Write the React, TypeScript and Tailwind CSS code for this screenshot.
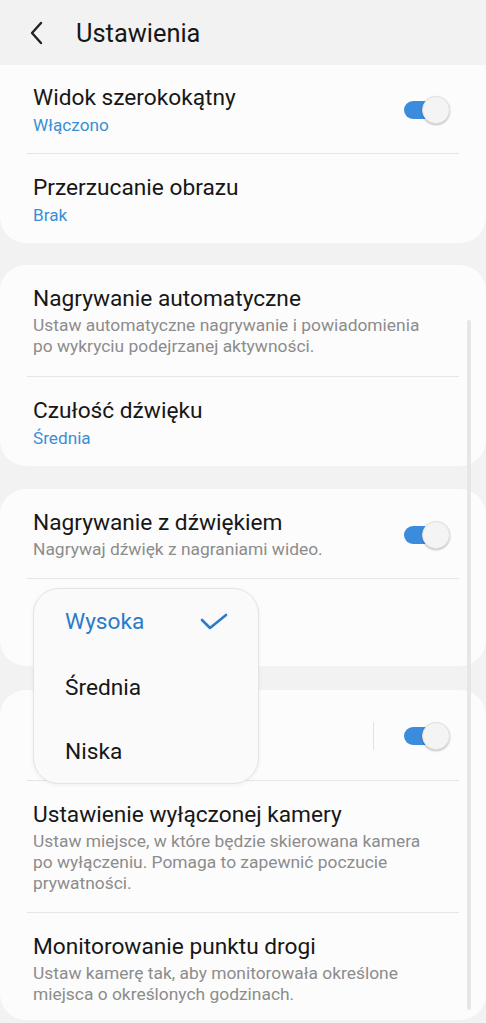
import React from "react";

const FONT = { fontFamily: "Roboto, 'Noto Sans', 'Liberation Sans', sans-serif" };

function Toggle() {
  return (
    <div className="relative w-[46px] h-[28px] shrink-0">
      <div className="absolute left-0 top-[5px] w-[40px] h-[18px] rounded-full bg-[#3b8cdc]" />
      <div className="absolute left-[18px] top-0 w-[28px] h-[28px] rounded-full bg-[#f4f4f4] border border-[#e2e2e2] shadow-[0_1px_2px_rgba(0,0,0,0.25)]" />
    </div>
  );
}

function Divider() {
  return <div className="mx-[27px] h-px bg-[#e6e6e6]" />;
}

type RowProps = {
  title: string;
  blue?: string;
  gray?: string[];
  toggle?: boolean;
  sep?: boolean;
  cls: string;
};

function Row({ title, blue, gray, toggle, sep, cls }: RowProps) {
  return (
    <div className={"flex items-center pl-[33px] pr-[36px] " + cls}>
      <div className="flex-1 min-w-0">
        <div className="text-[22.7px] leading-[28px] text-[#171717]">{title}</div>
        {blue && <div className="mt-[2px] text-[17.2px] leading-[22px] text-[#3a8fd4]">{blue}</div>}
        {gray && (
          <div className="mt-[2px] text-[17.4px] leading-[21px] text-[#8c8c8c]">
            {gray.map((g, i) => (
              <div key={i} className="whitespace-nowrap">{g}</div>
            ))}
          </div>
        )}
      </div>
      {sep && <div className="w-px h-[28px] bg-[#e2e2e2] mr-[30px]" />}
      {toggle && <Toggle />}
    </div>
  );
}

export default function App() {
  return (
    <div className="relative w-[486px] h-[1023px] overflow-hidden bg-[#f2f2f2]" style={FONT}>
      {/* Header */}
      <div className="h-[65px] flex items-center bg-[#f2f2f2]">
        <div className="w-[76px] flex items-center pl-[28px]">
          <svg width="18" height="24" viewBox="0 0 18 24" fill="none">
            <path d="M13 2 L4 12 L13 22" stroke="#222" strokeWidth="2.4" strokeLinecap="round" strokeLinejoin="round" />
          </svg>
        </div>
        <div className="text-[25.4px] leading-[30px] text-[#171717]">Ustawienia</div>
      </div>

      <div className="flex flex-col">
        {/* Card 1 */}
        <div className="bg-[#fcfcfc] rounded-b-[26px]">
          <Row cls="pt-[19px] pb-[17px]" title="Widok szerokokątny" blue="Włączono" toggle />
          <Divider />
          <Row cls="pt-[20px] pb-[17px]" title="Przerzucanie obrazu" blue="Brak" />
        </div>

        {/* Card 2 */}
        <div className="mt-[22px] bg-[#fcfcfc] rounded-[26px]">
          <Row
            cls="pt-[20px] pb-[19px]"
            title="Nagrywanie automatyczne"
            gray={["Ustaw automatyczne nagrywanie i powiadomienia", "po wykryciu podejrzanej aktywności."]}
          />
          <Divider />
          <Row cls="pt-[20px] pb-[17px]" title="Czułość dźwięku" blue="Średnia" />
        </div>

        {/* Card 3 */}
        <div className="mt-[23px] bg-[#fcfcfc] rounded-[26px]">
          <Row
            cls="pt-[20px] pb-[18px]"
            title="Nagrywanie z dźwiękiem"
            gray={["Nagrywaj dźwięk z nagraniami wideo."]}
            toggle
          />
          <Divider />
          <Row cls="pt-[20px] pb-[15px]" title="Czułość ruchu" blue="Wysoka" />
        </div>

        {/* Card 4 */}
        <div className="mt-[24px] bg-[#fcfcfc] rounded-[26px]">
          <Row cls="pt-[20px] pb-[18px]" title="Tryb nocny" blue="Automat." toggle sep />
          <Divider />
          <Row
            cls="pt-[20px] pb-[18px]"
            title="Ustawienie wyłączonej kamery"
            gray={[
              "Ustaw miejsce, w które będzie skierowana kamera",
              "po wyłączeniu. Pomaga to zapewnić poczucie",
              "prywatności.",
            ]}
          />
          <Divider />
          <Row
            cls="pt-[20px] pb-[15px]"
            title="Monitorowanie punktu drogi"
            gray={["Ustaw kamerę tak, aby monitorowała określone", "miejsca o określonych godzinach."]}
          />
        </div>
      </div>

      {/* Scrollbar */}
      <div className="absolute left-[467px] top-[320px] w-[4px] h-[690px] rounded-full bg-[#e6e6e6]" />

      {/* Popup menu */}
      <div className="absolute left-[33px] top-[588px] w-[226px] h-[196px] rounded-[26px] bg-[#fafafa] border border-[#e4e4e4] shadow-[0_1px_4px_rgba(0,0,0,0.06)] flex flex-col">
        <div className="h-[66px] shrink-0 flex items-center pl-[31px] pr-[30px]">
          <div className="flex-1 text-[22.7px] text-[#2a7cc7]">Wysoka</div>
          <svg width="28" height="18" viewBox="0 0 28 18" fill="none">
            <path d="M2 7 L10 15 L26 2" stroke="#2a7cc7" strokeWidth="2.6" strokeLinecap="round" strokeLinejoin="round" />
          </svg>
        </div>
        <div className="h-[66px] shrink-0 flex items-center pl-[31px] text-[22.7px] text-[#171717]">Średnia</div>
        <div className="h-[62px] shrink-0 flex items-center pl-[31px] text-[22.7px] text-[#171717]">Niska</div>
      </div>
    </div>
  );
}
